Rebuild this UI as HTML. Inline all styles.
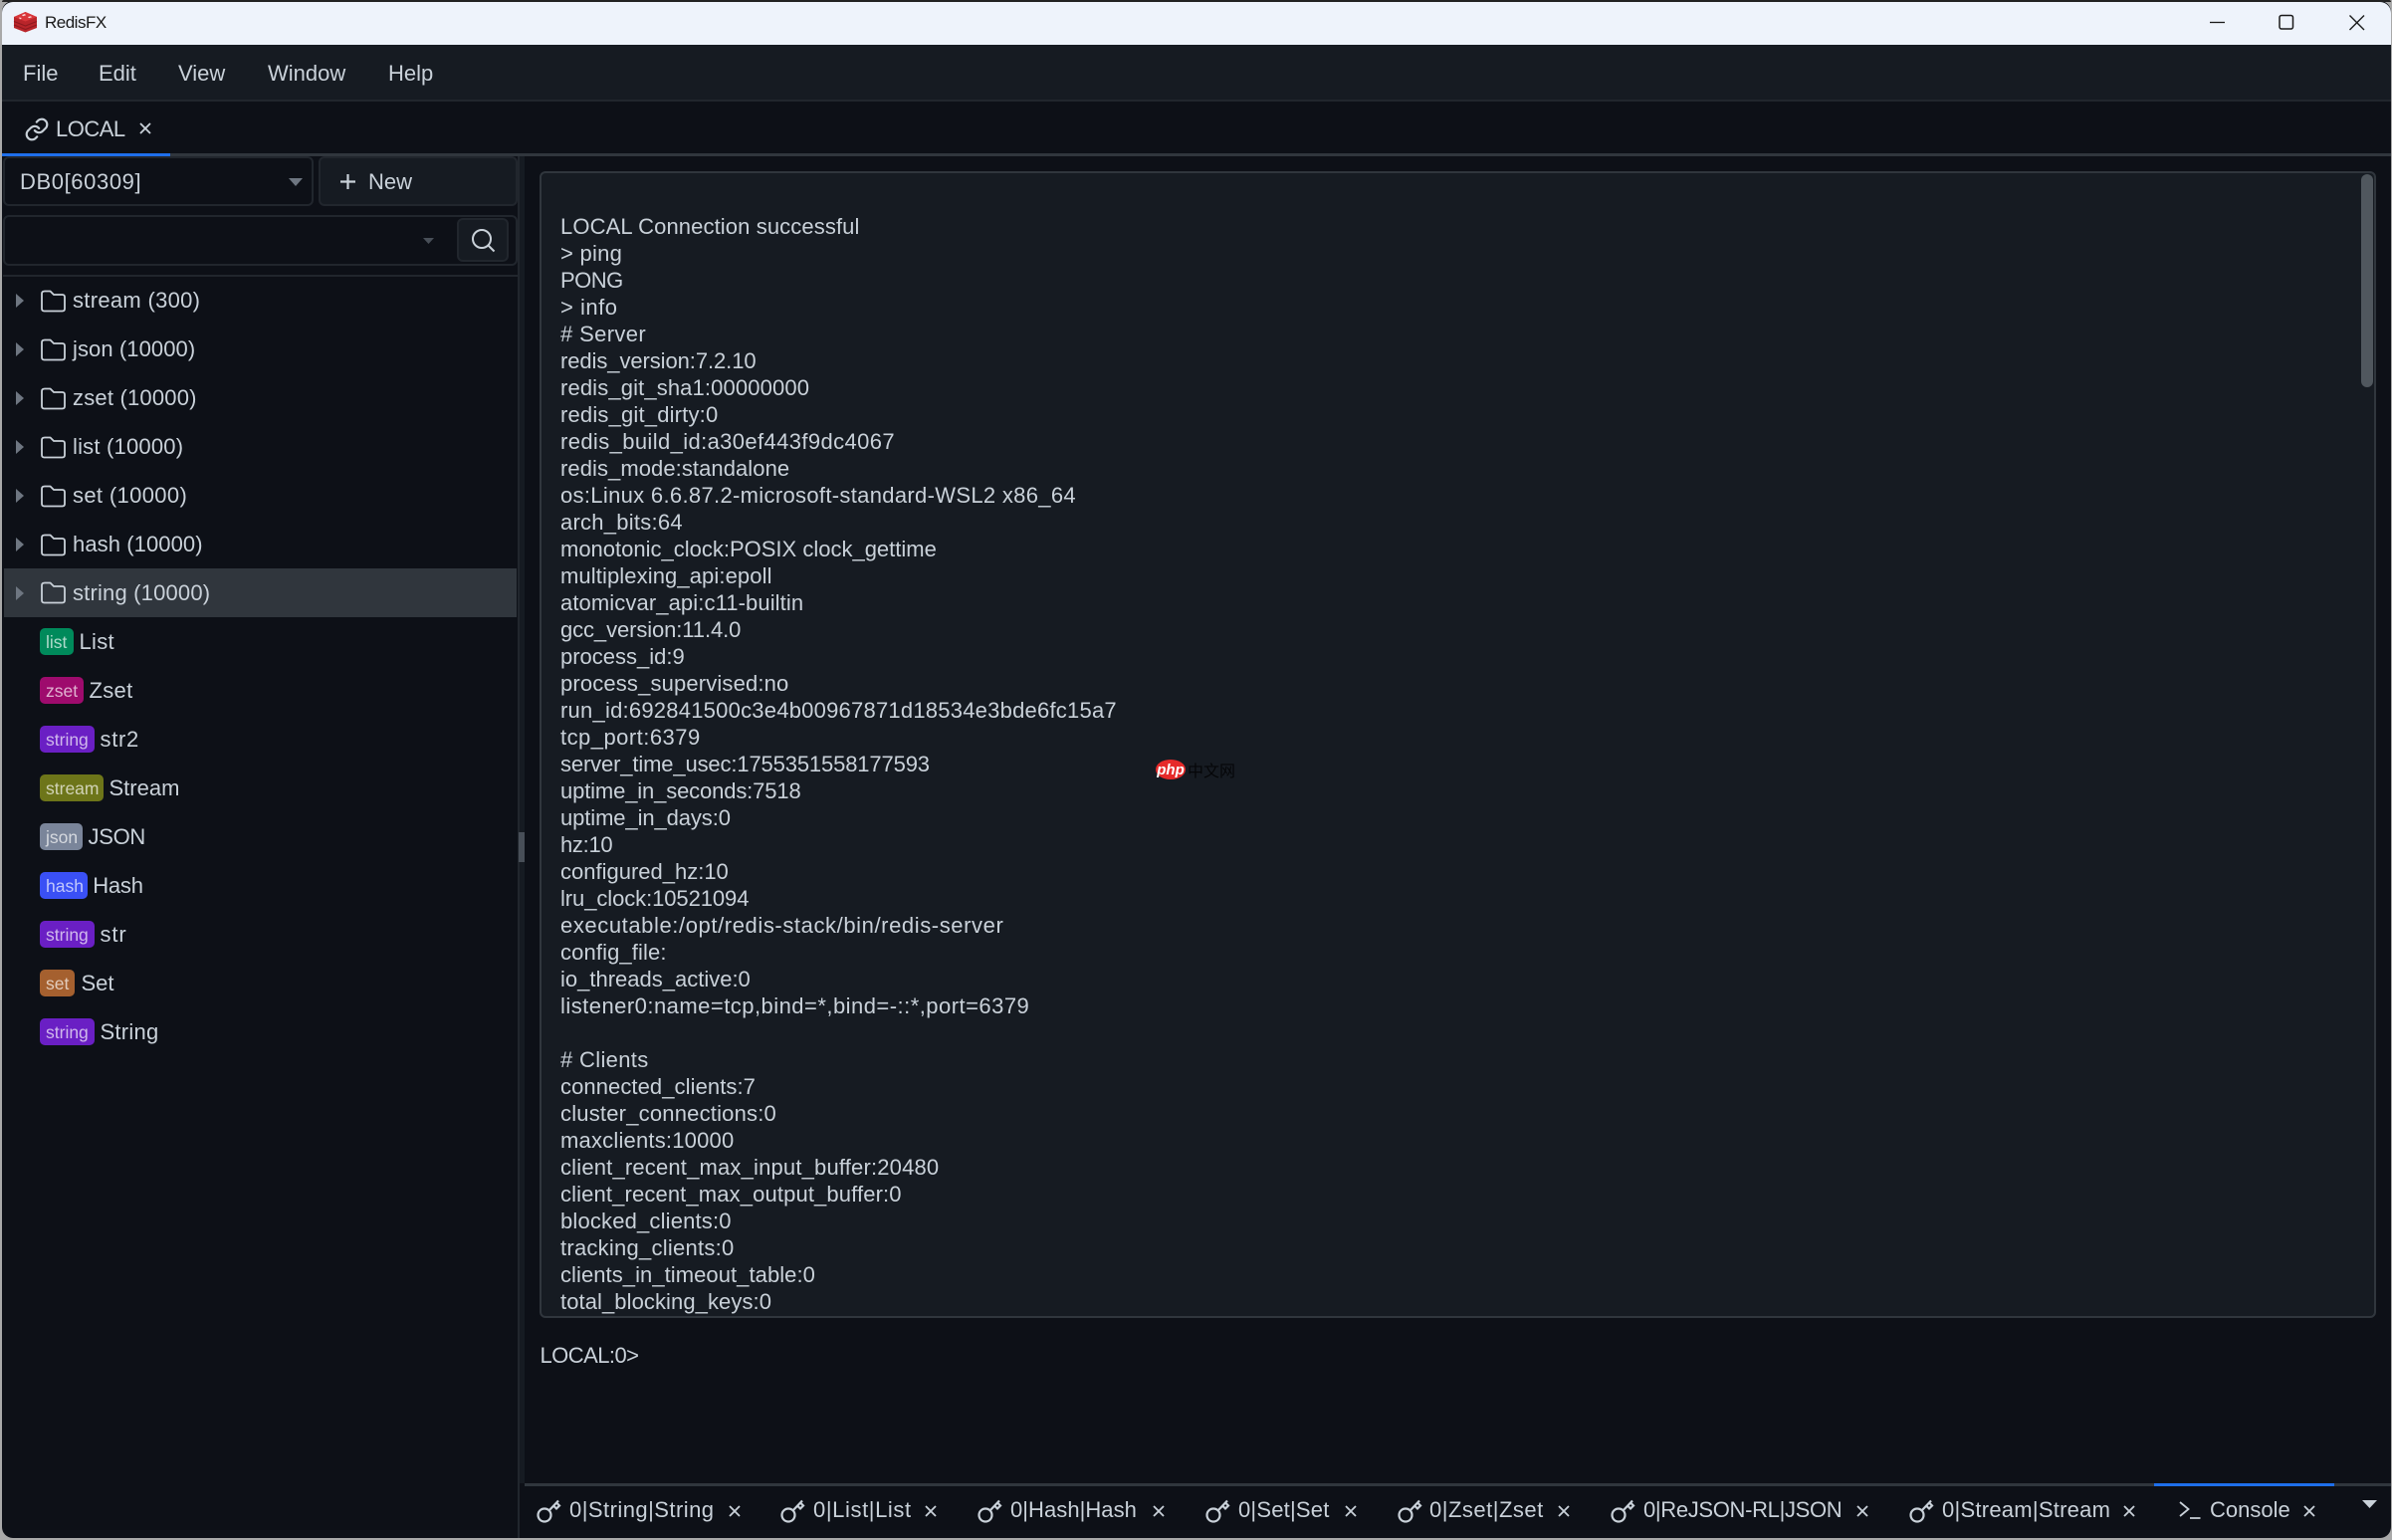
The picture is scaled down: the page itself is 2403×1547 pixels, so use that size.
<!DOCTYPE html>
<html><head><meta charset="utf-8"><title>RedisFX</title>
<style>
*{box-sizing:border-box;margin:0;padding:0}
html,body{width:2403px;height:1547px;overflow:hidden;background:#a9a9a9}
body{position:relative;font-family:"Liberation Sans","Noto Sans CJK SC",sans-serif;font-size:22px;color:#c9d1d9}
.a{position:absolute}
.t{position:absolute;white-space:pre;line-height:30px;height:30px}
#win{position:absolute;left:2px;top:1px;width:2400px;height:1544px;border-radius:11px;overflow:hidden;background:#0d1017;}
#lines{position:absolute;left:563px;top:214px;width:1800px;height:1108px;overflow:hidden;line-height:27px;color:#c9d1d9}
#lines div{height:27px;white-space:pre}
.row{position:absolute;left:4px;width:516px;height:49px}
.row .lbl{position:absolute;top:9px;line-height:30px;white-space:pre}
.row svg{position:absolute}
.b{position:absolute;left:40px;top:10px;height:27px;border-radius:5px;font-size:17.5px;line-height:29px;padding-left:6px;color:rgba(255,255,255,.68);white-space:pre}
.x{position:absolute}
</style></head><body>
<div id="win"></div>
<!-- title bar -->
<div class="a" style="left:2px;top:0;width:2400px;height:2px;background:#222;border-radius:11px 11px 0 0"></div>
<div class="a" style="left:2px;top:2px;width:2400px;height:43px;background:#eef3fb;border-radius:11px 11px 0 0"></div>
<svg class="a" style="left:13px;top:11px" width="25" height="22" viewBox="0 0 25 22">
<path d="M1 6 L12.500 1 L24 6 V17 L12.500 21.500 L1 17Z" fill="#b9252a"/>
<path d="M1 6 L12.500 1 L24 6 L12.500 10.500Z" fill="#d9363a"/>
<path d="M1 10.500 L12.500 15 L24 10.500 M1 14 L12.500 18.500 L24 14" stroke="#8e1a1f" stroke-width="1.200" fill="none"/>
<path d="M9 4 l3 -1 1 1.200 -3 1z M15 6 l3 -.8 1 1 -3 1z M6 6.500l3 .5 -2 1.500z" fill="#fbdcdc"/>
</svg>
<div class="t" style="left:45px;top:8px;font-size:17px;letter-spacing:-.5px;color:#1a1a1a">RedisFX</div>
<svg class="a" style="left:2215px;top:10px" width="170" height="26" viewBox="0 0 170 26" fill="none" stroke="#1a1a1a">
<path d="M5 12.500H20" stroke-width="1.300"/>
<rect x="75" y="5.500" width="13.500" height="13.500" rx="2" stroke-width="1.500"/>
<path d="M145.500 5.500L160 20M160 5.500L145.500 20" stroke-width="1.400"/>
</svg>
<!-- menu -->
<div class="a" style="left:2px;top:45px;width:2400px;height:55px;background:#161b22"></div>
<div class="a" style="left:2px;top:100px;width:2400px;height:2px;background:#21262d"></div>
<div class="t" style="left:23px;top:59px">File</div>
<div class="t" style="left:99px;top:59px">Edit</div>
<div class="t" style="left:179px;top:59px">View</div>
<div class="t" style="left:269px;top:59px">Window</div>
<div class="t" style="left:390px;top:59px">Help</div>
<!-- tabs -->
<div class="a" style="left:2px;top:154px;width:2400px;height:3px;background:#30363d"></div>
<div class="a" style="left:2px;top:154px;width:169px;height:3px;background:#1f6feb"></div>
<svg class="a" style="left:24px;top:117px" width="26" height="26" viewBox="0 0 24 24" fill="none" stroke="#c9d1d9" stroke-width="2" stroke-linecap="round" stroke-linejoin="round">
<path d="M10 13a5 5 0 0 0 7.500.500l3-3a5 5 0 0 0-7-7l-1.700 1.700"/>
<path d="M14 11a5 5 0 0 0-7.500-.500l-3 3a5 5 0 0 0 7 7l1.700-1.700"/>
</svg>
<div class="t" style="left:56px;top:115px;letter-spacing:-.5px">LOCAL</div>
<svg class="a" style="left:140px;top:123px" width="12" height="12" viewBox="0 0 12 12"><path d="M1 1L11 11M11 1L1 11" stroke="#c9d1d9" stroke-width="1.800"/></svg>
<!-- sidebar -->
<div class="a" style="left:3px;top:157px;width:312px;height:50px;background:#0d1017;border:2px solid #21262d;border-radius:6px"></div>
<div class="t" style="left:20px;top:168px;letter-spacing:.6px">DB0[60309]</div>
<svg class="a" style="left:290px;top:179px" width="14" height="8"><path d="M0 0H14L7 8Z" fill="#6e7681"/></svg>
<div class="a" style="left:320px;top:157px;width:200px;height:50px;background:#161b22;border:2px solid #21262d;border-radius:6px"></div>
<svg class="a" style="left:342px;top:175px" width="15" height="15"><path d="M7.500 0V15M0 7.500H15" stroke="#c9d1d9" stroke-width="2.200"/></svg>
<div class="t" style="left:370px;top:168px">New</div>
<div class="a" style="left:3px;top:216px;width:517px;height:51px;background:#0d1017;border:2px solid #21262d;border-radius:6px"></div>
<svg class="a" style="left:425px;top:239px" width="11" height="6"><path d="M0 0H11L5.500 6Z" fill="#484f58"/></svg>
<div class="a" style="left:459px;top:219px;width:52px;height:44px;background:#161b22;border:2px solid #21262d;border-radius:6px"></div>
<svg class="a" style="left:473px;top:229px" width="25" height="25" viewBox="0 0 25 25" fill="none" stroke="#c9d1d9" stroke-width="2"><circle cx="11" cy="11" r="9"/><path d="M17.500 17.500L23.500 23.500"/></svg>
<div class="a" style="left:3px;top:276px;width:517px;height:2px;background:#21262d"></div>
<div class="a" style="left:520px;top:157px;width:7px;height:1333px;background:#161b22"></div>
<div class="a" style="left:520px;top:157px;width:2px;height:1388px;background:#21262d"></div>
<div class="a" style="left:521px;top:836px;width:6px;height:30px;background:#484f58"></div>

<svg width="0" height="0" style="position:absolute"><defs>
<g id="arr"><path d="M0 0L8 7L0 14Z" fill="#6e7681"/></g>
<g id="fld"><path d="M4 1.500H9.500L13 5H21.500Q24 5 24 7.500V19Q24 21.500 21.500 21.500H3.500Q1 21.500 1 19V4Q1 1.500 4 1.500Z" fill="none" stroke="#c9d1d9" stroke-width="1.800" stroke-linejoin="round"/></g>
<g id="key"><circle cx="8" cy="17" r="6.500" fill="none" stroke="#c9d1d9" stroke-width="2.200"/><path d="M12.500 12.500L22 2.500M17 7.500l3 3 3-3-3-3" fill="none" stroke="#c9d1d9" stroke-width="2.200"/></g>
<g id="cx"><path d="M1 1L11 11M11 1L1 11" stroke="#c9d1d9" stroke-width="1.800"/></g>
</defs></svg>

<div class="row" style="top:278px"><svg style="left:12px;top:17px" width="8" height="14"><use href="#arr"/></svg><svg style="left:37px;top:13px" width="25" height="23"><use href="#fld"/></svg><span class="lbl" style="left:69px;letter-spacing:.3px">stream (300)</span></div>
<div class="row" style="top:327px"><svg style="left:12px;top:17px" width="8" height="14"><use href="#arr"/></svg><svg style="left:37px;top:13px" width="25" height="23"><use href="#fld"/></svg><span class="lbl" style="left:69px;letter-spacing:.08px">json (10000)</span></div>
<div class="row" style="top:376px"><svg style="left:12px;top:17px" width="8" height="14"><use href="#arr"/></svg><svg style="left:37px;top:13px" width="25" height="23"><use href="#fld"/></svg><span class="lbl" style="left:69px;letter-spacing:.2px">zset (10000)</span></div>
<div class="row" style="top:425px"><svg style="left:12px;top:17px" width="8" height="14"><use href="#arr"/></svg><svg style="left:37px;top:13px" width="25" height="23"><use href="#fld"/></svg><span class="lbl" style="left:69px;letter-spacing:.2px">list (10000)</span></div>
<div class="row" style="top:474px"><svg style="left:12px;top:17px" width="8" height="14"><use href="#arr"/></svg><svg style="left:37px;top:13px" width="25" height="23"><use href="#fld"/></svg><span class="lbl" style="left:69px;letter-spacing:.35px">set (10000)</span></div>
<div class="row" style="top:523px"><svg style="left:12px;top:17px" width="8" height="14"><use href="#arr"/></svg><svg style="left:37px;top:13px" width="25" height="23"><use href="#fld"/></svg><span class="lbl" style="left:69px;letter-spacing:.08px">hash (10000)</span></div>
<div class="row" style="top:571px;height:49px;width:515px;background:#30363d"><svg style="left:12px;top:18px" width="8" height="14"><use href="#arr"/></svg><svg style="left:37px;top:13px" width="25" height="23"><use href="#fld"/></svg><span class="lbl" style="left:69px;top:10px;letter-spacing:.18px">string (10000)</span></div>

<div class="row" style="top:621px;left:0"><span class="b" style="width:33.500px;background:#008a5b">list</span><span class="lbl" style="left:79.500px;letter-spacing:.3px">List</span></div>
<div class="row" style="top:670px;left:0"><span class="b" style="width:43.500px;background:#9e0b6d">zset</span><span class="lbl" style="left:89.500px;letter-spacing:.3px">Zset</span></div>
<div class="row" style="top:719px;left:0"><span class="b" style="width:54.500px;background:#6a1fc4">string</span><span class="lbl" style="left:100.500px;letter-spacing:.7px">str2</span></div>
<div class="row" style="top:768px;left:0"><span class="b" style="width:63.500px;background:#6d7519">stream</span><span class="lbl" style="left:109.500px">Stream</span></div>
<div class="row" style="top:817px;left:0"><span class="b" style="width:42.500px;background:#7a859a">json</span><span class="lbl" style="left:88.500px;letter-spacing:-.3px">JSON</span></div>
<div class="row" style="top:866px;left:0"><span class="b" style="width:48px;background:#3a50f5">hash</span><span class="lbl" style="left:93.200px;letter-spacing:-.2px">Hash</span></div>
<div class="row" style="top:915px;left:0"><span class="b" style="width:54.500px;background:#6a1fc4">string</span><span class="lbl" style="left:100.500px;letter-spacing:.9px">str</span></div>
<div class="row" style="top:964px;left:0"><span class="b" style="width:35px;background:#a5602f">set</span><span class="lbl" style="left:81.500px">Set</span></div>
<div class="row" style="top:1013px;left:0"><span class="b" style="width:54.500px;background:#6a1fc4">string</span><span class="lbl" style="left:100.500px;letter-spacing:.25px">String</span></div>

<!-- console panel -->
<div class="a" style="left:542px;top:172px;width:1845px;height:1152px;background:#161b22;border:2px solid #30363d;border-radius:6px"></div>
<div class="a" style="left:2372px;top:175px;width:12px;height:214px;background:#50575e;border-radius:6px"></div>
<div id="lines"><div style="letter-spacing:.11px">LOCAL Connection successful</div><div style="letter-spacing:.25px">&gt; ping</div><div style="letter-spacing:-.5px">PONG</div><div style="letter-spacing:.5px">&gt; info</div><div style="letter-spacing:.37px"># Server</div><div style="letter-spacing:-.08px">redis_version:7.2.10</div><div style="letter-spacing:.13px">redis_git_sha1:00000000</div><div style="letter-spacing:.18px">redis_git_dirty:0</div><div style="letter-spacing:.38px">redis_build_id:a30ef443f9dc4067</div><div style="letter-spacing:.07px">redis_mode:standalone</div><div style="letter-spacing:.32px">os:Linux 6.6.87.2-microsoft-standard-WSL2 x86_64</div><div style="letter-spacing:.25px">arch_bits:64</div><div>monotonic_clock:POSIX clock_gettime</div><div style="letter-spacing:.1px">multiplexing_api:epoll</div><div style="letter-spacing:.1px">atomicvar_api:c11-builtin</div><div style="letter-spacing:-.1px">gcc_version:11.4.0</div><div>process_id:9</div><div style="letter-spacing:.15px">process_supervised:no</div><div style="letter-spacing:.23px">run_id:692841500c3e4b00967871d18534e3bde6fc15a7</div><div style="letter-spacing:.47px">tcp_port:6379</div><div style="letter-spacing:-.14px">server_time_usec:1755351558177593</div><div style="letter-spacing:-.14px">uptime_in_seconds:7518</div><div style="letter-spacing:-.1px">uptime_in_days:0</div><div style="letter-spacing:-.3px">hz:10</div><div>configured_hz:10</div><div style="letter-spacing:-.08px">lru_clock:10521094</div><div style="letter-spacing:.59px">executable:/opt/redis-stack/bin/redis-server</div><div style="letter-spacing:.12px">config_file:</div><div>io_threads_active:0</div><div style="letter-spacing:.47px">listener0:name=tcp,bind=*,bind=-::*,port=6379</div><div>&nbsp;</div><div style="letter-spacing:.33px"># Clients</div><div style="letter-spacing:.08px">connected_clients:7</div><div style="letter-spacing:.2px">cluster_connections:0</div><div style="letter-spacing:.2px">maxclients:10000</div><div style="letter-spacing:.18px">client_recent_max_input_buffer:20480</div><div style="letter-spacing:.13px">client_recent_max_output_buffer:0</div><div style="letter-spacing:.17px">blocked_clients:0</div><div style="letter-spacing:.25px">tracking_clients:0</div><div style="letter-spacing:.06px">clients_in_timeout_table:0</div><div style="letter-spacing:.08px">total_blocking_keys:0</div></div>
<!-- watermark -->
<svg class="a" style="left:1160px;top:762px" width="32" height="22" viewBox="0 0 32 22"><ellipse cx="16" cy="11" rx="15" ry="10" fill="#e62a2a"/><text x="16" y="16" text-anchor="middle" font-family="Liberation Sans" font-size="15" font-weight="700" font-style="italic" fill="#fff">php</text></svg>
<div class="t" style="left:1193px;top:758px;font-size:16px;color:#050608;font-family:'Noto Sans CJK SC',sans-serif">中文网</div>
<div class="t" style="left:542.500px;top:1347px;letter-spacing:-.55px;color:#c9d1d9">LOCAL:0&gt;</div>

<!-- bottom tabs -->
<div class="a" style="left:527px;top:1490px;width:1875px;height:3px;background:#30363d"></div>
<div class="a" style="left:2164px;top:1490px;width:181px;height:3px;background:#1f6feb"></div>

<svg class="x" style="left:539px;top:1505px" width="25" height="25"><use href="#key"/></svg>
<div class="t" style="left:572px;top:1502px;letter-spacing:.46px">0|String|String</div>
<svg class="x" style="left:732px;top:1512px" width="12" height="12"><use href="#cx"/></svg>

<svg class="x" style="left:784px;top:1505px" width="25" height="25"><use href="#key"/></svg>
<div class="t" style="left:817px;top:1502px;letter-spacing:.6px">0|List|List</div>
<svg class="x" style="left:929px;top:1512px" width="12" height="12"><use href="#cx"/></svg>

<svg class="x" style="left:982px;top:1505px" width="25" height="25"><use href="#key"/></svg>
<div class="t" style="left:1015px;top:1502px;letter-spacing:.05px">0|Hash|Hash</div>
<svg class="x" style="left:1158px;top:1512px" width="12" height="12"><use href="#cx"/></svg>

<svg class="x" style="left:1211px;top:1505px" width="25" height="25"><use href="#key"/></svg>
<div class="t" style="left:1244px;top:1502px;letter-spacing:.2px">0|Set|Set</div>
<svg class="x" style="left:1351px;top:1512px" width="12" height="12"><use href="#cx"/></svg>

<svg class="x" style="left:1404px;top:1505px" width="25" height="25"><use href="#key"/></svg>
<div class="t" style="left:1436px;top:1502px;letter-spacing:.5px">0|Zset|Zset</div>
<svg class="x" style="left:1565px;top:1512px" width="12" height="12"><use href="#cx"/></svg>

<svg class="x" style="left:1618px;top:1505px" width="25" height="25"><use href="#key"/></svg>
<div class="t" style="left:1651px;top:1502px;letter-spacing:-.33px">0|ReJSON-RL|JSON</div>
<svg class="x" style="left:1865px;top:1512px" width="12" height="12"><use href="#cx"/></svg>

<svg class="x" style="left:1918px;top:1505px" width="25" height="25"><use href="#key"/></svg>
<div class="t" style="left:1951px;top:1502px;letter-spacing:.25px">0|Stream|Stream</div>
<svg class="x" style="left:2133px;top:1512px" width="12" height="12"><use href="#cx"/></svg>

<svg class="x" style="left:2189px;top:1508px" width="22" height="20" viewBox="0 0 22 20" fill="none" stroke="#c9d1d9" stroke-width="1.800"><path d="M1 1L9.500 8L1 15M11 17H21.500"/></svg>
<div class="t" style="left:2220px;top:1502px">Console</div>
<svg class="x" style="left:2314px;top:1512px" width="12" height="12"><use href="#cx"/></svg>
<svg class="x" style="left:2373px;top:1507px" width="15" height="8"><path d="M0 0H15L7.500 8Z" fill="#c9d1d9"/></svg>
</body></html>
